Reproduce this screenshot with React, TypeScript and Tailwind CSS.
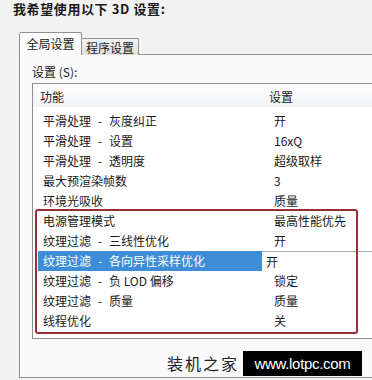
import React from 'react';

const rows: { name: string; value: string; selected?: boolean }[] = [
  { name: '平滑处理 - 灰度纠正', value: '开' },
  { name: '平滑处理 - 设置', value: '16xQ' },
  { name: '平滑处理 - 透明度', value: '超级取样' },
  { name: '最大预渲染帧数', value: '3' },
  { name: '环境光吸收', value: '质量' },
  { name: '电源管理模式', value: '最高性能优先' },
  { name: '纹理过滤 - 三线性优化', value: '开' },
  { name: '纹理过滤 - 各向异性采样优化', value: '开', selected: true },
  { name: '纹理过滤 - 负 LOD 偏移', value: '锁定' },
  { name: '纹理过滤 - 质量', value: '质量' },
  { name: '线程优化', value: '关' },
];

// the dialog draws " - " with wide half-width spaces
const Name = ({ text }: { text: string }) => {
  const parts = text.split(' - ');
  if (parts.length === 1) return <>{text}</>;
  return (
    <>
      {parts[0]}
      <span className="inline-block w-[18px] text-center">-</span>
      {parts[1]}
    </>
  );
};

export default function App() {
  return (
    <div className="w-[372px] h-[380px] overflow-hidden bg-[#f2f2f2] text-[#1a1a1a] font-['Noto_Sans_CJK_SC',sans-serif]">
      <div className="pl-[13px] pt-[1px] h-[16px] text-[13px] leading-[16px] font-bold tracking-[0.6px]">
        我希望使用以下 3D 设置:
      </div>

      <div className="ml-[19px] mt-[16px]">
        {/* tabs */}
        <div className="flex items-end h-[22px]">
          <div className="relative z-10 -mb-px w-[63px] h-[23px] border border-b-0 border-[#8e9197] rounded-t-[2px] bg-[#fbfbfb] text-[12px] leading-[22px] text-center">
            全局设置
          </div>
          <div className="w-[57px] h-[17px] border border-l-0 border-b-0 border-[#8e9197] rounded-tr-[2px] bg-gradient-to-b from-[#f4f4f4] to-[#dedede] text-[12px] leading-[17px] text-center -mb-px">
            程序设置
          </div>
        </div>

        {/* panel */}
        <div className="h-[324px] border border-r-0 border-[#8e9197] bg-[#fafafa] pl-[12px]">
          <div className="mt-[9px] text-[12px] leading-[16px]">设置 (S):</div>

          <div className="relative mt-[3px] h-[256px] border border-r-0 border-[#8b8f96] bg-white">
            <div className="flex h-[23px] bg-gradient-to-b from-white to-[#f2f3f5] text-[12px] leading-[26px]">
              <div className="w-[229px] pl-[7px]">功能</div>
              <div className="pl-[7px]">设置</div>
            </div>

            <div className="pt-[4px]">
              {rows.map((r) => (
                <div key={r.name} className="relative flex h-[20px] text-[12px] leading-[20px]">
                  <div
                    className={
                      r.selected
                        ? 'ml-[5px] w-[224px] pl-[5px] bg-[#3d8ed6] text-white whitespace-nowrap'
                        : 'ml-[5px] w-[224px] pl-[5px] whitespace-nowrap'
                    }
                  >
                    <Name text={r.name} />
                  </div>
                  {r.selected ? (
                    <div className="flex-1 pl-[4px] border-t border-[#a8a8a8] leading-[19px]">{r.value}</div>
                  ) : (
                    <div className="pl-[12px] whitespace-nowrap">{r.value}</div>
                  )}
                </div>
              ))}
            </div>

            {/* red highlight box */}
            <div className="absolute left-[2px] top-[125px] w-[323px] h-[125px] border-2 border-[#9a2e35] rounded-[3px]" />
          </div>

          <div className="mt-[12px] flex items-center h-[25px]">
            <div className="ml-[135px] w-[76px] text-[16px] leading-[25px] tracking-[2px] text-[#222]">装机之家</div>
            <div className="w-[119px] h-[25px] bg-black text-white text-[15px] leading-[25px] text-center font-['Liberation_Sans',sans-serif] tracking-[-0.3px]">
              www.lotpc.com
            </div>
          </div>
        </div>
      </div>
    </div>
  );
}
